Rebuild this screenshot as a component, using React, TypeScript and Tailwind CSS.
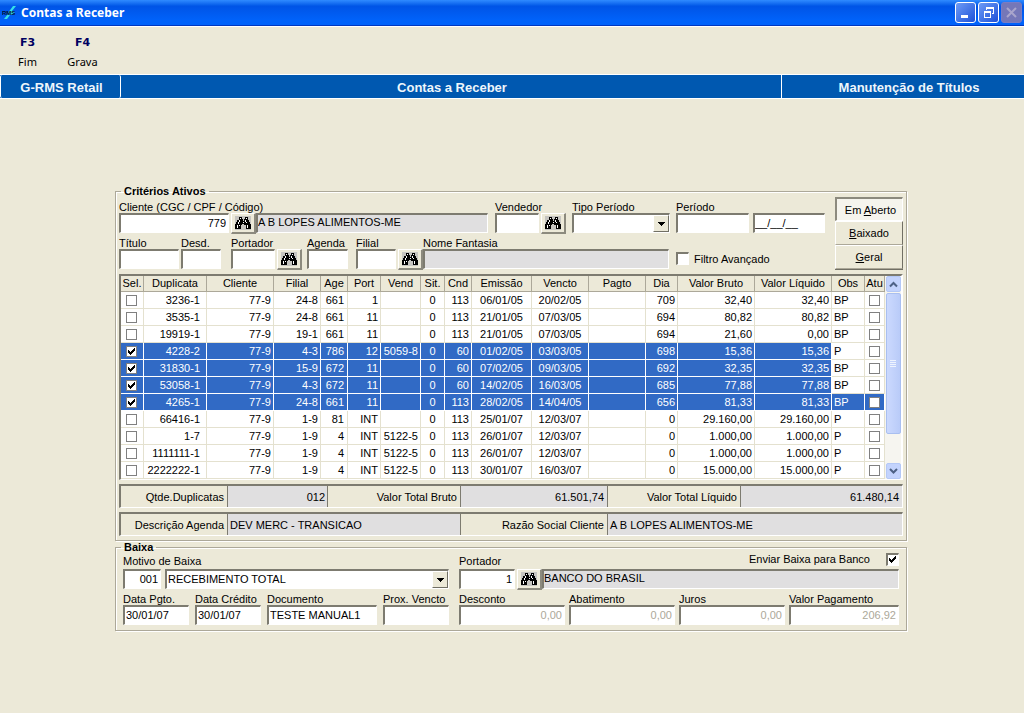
import { useState } from "react";
import type { ReactNode } from "react";
import clsx from "clsx";

const sunken =
  "border-t-2 border-l-2 border-r border-b border-t-[#7d7b70] border-l-[#7d7b70] border-r-white border-b-white";
const raised = "border border-t-white border-l-white border-r-[#716f64] border-b-[#716f64]";

type Row = {
  dup: string;
  cli: string;
  filial: string;
  age: string;
  port: string;
  vend: string;
  cnd: string;
  emissao: string;
  vencto: string;
  dia: string;
  bruto: string;
  liquido: string;
  obs: string;
};

const makeRow = (line: string): Row => {
  const [dup, filial, age, port, vend, cnd, emissao, vencto, dia, bruto, liquido, obs] = line.split("|");
  return { dup, cli: "77-9", filial, age, port, vend, cnd, emissao, vencto, dia, bruto, liquido, obs };
};

const ROWS: Row[] = [
  "3236-1|24-8|661|1||113|06/01/05|20/02/05|709|32,40|32,40|BP",
  "3535-1|24-8|661|11||113|21/01/05|07/03/05|694|80,82|80,82|BP",
  "19919-1|19-1|661|11||113|21/01/05|07/03/05|694|21,60|0,00|BP",
  "4228-2|4-3|786|12|5059-8|60|01/02/05|03/03/05|698|15,36|15,36|P",
  "31830-1|15-9|672|11||60|07/02/05|09/03/05|692|32,35|32,35|BP",
  "53058-1|4-3|672|11||60|14/02/05|16/03/05|685|77,88|77,88|BP",
  "4265-1|24-8|661|11||113|28/02/05|14/04/05|656|81,33|81,33|BP",
  "66416-1|1-9|81|INT||113|25/01/07|12/03/07|0|29.160,00|29.160,00|P",
  "1-7|1-9|4|INT|5122-5|113|26/01/07|12/03/07|0|1.000,00|1.000,00|P",
  "1111111-1|1-9|4|INT|5122-5|113|26/01/07|12/03/07|0|1.000,00|1.000,00|P",
  "2222222-1|1-9|4|INT|5122-5|113|30/01/07|16/03/07|0|15.000,00|15.000,00|P",
].map(makeRow);

const COLUMNS = [
  { title: "Sel.", width: "w-[23px]" },
  { title: "Duplicata", width: "w-[63px]" },
  { title: "Cliente", width: "w-[67px]" },
  { title: "Filial", width: "w-[47px]" },
  { title: "Age", width: "w-[27px]" },
  { title: "Port", width: "w-[33px]" },
  { title: "Vend", width: "w-[40px]" },
  { title: "Sit.", width: "w-[24px]" },
  { title: "Cnd", width: "w-[27px]" },
  { title: "Emissão", width: "w-[60px]" },
  { title: "Vencto", width: "w-[57px]" },
  { title: "Pagto", width: "w-[57px]" },
  { title: "Dia", width: "w-[32px]" },
  { title: "Valor Bruto", width: "w-[77px]" },
  { title: "Valor Líquido", width: "w-[77px]" },
  { title: "Obs", width: "w-[33px]" },
  { title: "Atu", width: "w-[20px]" },
];

function Binoculars() {
  return (
    <svg width="16" height="14" viewBox="0 0 16 14" shapeRendering="crispEdges" aria-hidden="true">
      <path fill="#c6c5c1" d="M0 0h16v14H0z" />
      <path
        fill="#000"
        d="M4 1h3v2h1v2h1V3h1V1h3v3h1v2h1v2h1v5h-5V9H9V8H7v1H6v4H0V8h1V6h1V4h2z"
      />
      <path fill="#fff" d="M5 2h1v1H5zM11 2h1v1h-1zM4 4h1v2H4zM10 4h1v2h-1zM3 6h1v2H3zM2 9h1v3H2zM4 9h1v1H4zM12 9h1v3h-1zM11 6h1v1h-1zM8 6h1v1H8z" />
    </svg>
  );
}

function LookupButton({ label }: { label: string }) {
  return (
    <button
      type="button"
      aria-label={label}
      className="ml-0.5 flex h-[21px] w-[25px] shrink-0 items-center justify-center border border-t-white border-r-2 border-r-[#8c8a7e] border-b-2 border-b-[#8c8a7e] border-l-white bg-[#ece9d8]"
    >
      <Binoculars />
    </button>
  );
}

function Field({
  id,
  label,
  value = "",
  className,
  inputClass,
  gap,
  disabled,
  children,
}: {
  id: string;
  label: string;
  value?: string;
  className?: string;
  inputClass?: string;
  gap?: boolean;
  disabled?: boolean;
  children?: ReactNode;
}) {
  return (
    <div className={className}>
      <label htmlFor={id} className={clsx("block h-[11px] leading-[11px] whitespace-nowrap", gap && "mb-0.5")}>
        {label}
      </label>
      <div className="flex h-5">
        <input
          id={id}
          defaultValue={value}
          disabled={disabled}
          className={clsx(sunken, "h-5 min-w-0 bg-white pr-0.5 pb-0.5 pl-px disabled:text-[#aca899]", inputClass ?? "w-full")}
        />
        {children}
      </div>
    </div>
  );
}

function Combo({ id, options }: { id: string; options: string[] }) {
  return (
    <div className="relative h-5 flex-1">
      <select id={id} className={clsx(sunken, "h-5 w-full appearance-none bg-white pl-px")}>
        {options.map(o => (
          <option key={o}>{o}</option>
        ))}
      </select>
      <span
        className={clsx(raised, "pointer-events-none absolute top-0.5 right-px flex h-[17px] w-4 items-center justify-center bg-[#ece9d8]")}
      >
        <svg width="7" height="4" viewBox="0 0 7 4" shapeRendering="crispEdges">
          <path d="M0 0h7v1H6v1H5v1H4v1H3V3H2V2H1V1H0z" />
        </svg>
      </span>
    </div>
  );
}

function Check({
  id,
  label,
  checked,
  onChange,
  grid,
}: {
  id?: string;
  label?: string;
  checked?: boolean;
  onChange?: () => void;
  grid?: boolean;
}) {
  return (
    <span className="relative block shrink-0">
      <input
        id={id}
        type="checkbox"
        aria-label={label}
        {...(onChange ? { checked: !!checked, onChange } : { defaultChecked: checked })}
        className={clsx("peer block appearance-none bg-white", grid ? "size-[11px] border border-[#808080]" : clsx(sunken, "size-[13px]"))}
      />
      <svg
        width="7"
        height="7"
        viewBox="0 0 7 7"
        shapeRendering="crispEdges"
        className={clsx("pointer-events-none absolute hidden peer-checked:block", grid ? "top-0.5 left-0.5" : "top-[3px] left-[3px]")}
      >
        <path d="M0 2h1v1h1v1h1V3h1V2h1V1h1V0h1v3H6v1H5v1H4v1H3v1H2V6H1V5H0z" />
      </svg>
    </span>
  );
}

function TitleBar() {
  const frame = "flex size-[21px] items-center justify-center rounded-[3px] border";
  return (
    <header className="flex h-[26px] items-center bg-linear-to-b from-[#2f8bff] from-0% via-[#0054e6] via-25% to-[#0062fa] to-80% pr-0.5 pl-0.5 border-b border-[#0038c0]">
      <svg width="17" height="16" viewBox="0 0 17 16" aria-hidden="true">
        <path d="M2 14l4-5 2 1-3 4zM6 8l5-7 3 0-4 5 3 1-4 3z" fill="#35e0e8" />
        <text x="0" y="10" fontSize="6" fontWeight="bold" fontFamily="Liberation Sans, sans-serif" fill="#001030">
          RMS
        </text>
      </svg>
      <h1 className="ml-0.5 flex-1 pt-px font-['Noto_Sans',sans-serif] text-[12px] leading-4 font-bold text-white">
        Contas a Receber
      </h1>
      <div className="flex gap-0.5">
        <button type="button" aria-label="Minimizar" className={clsx(frame, "border-white bg-linear-to-br from-[#6f9bf5] to-[#1e4fd8]")}>
          <svg width="13" height="13" viewBox="0 0 13 13">
            <path d="M2 9h7v3H2z" fill="#fff" />
          </svg>
        </button>
        <button type="button" aria-label="Restaurar" className={clsx(frame, "border-white bg-linear-to-br from-[#6f9bf5] to-[#1e4fd8]")}>
          <svg width="13" height="13" viewBox="0 0 13 13" fill="#fff" shapeRendering="crispEdges">
            <path d="M4 1h8v7h-2V7h1V3H5v1H4zM2 5h7v7H2zm1 2v4h5V7z" fillRule="evenodd" />
          </svg>
        </button>
        <button type="button" aria-label="Fechar" disabled className={clsx(frame, "border-[#7a7cc4] bg-[#7577b8]")}>
          <svg width="13" height="13" viewBox="0 0 13 13">
            <path d="M2 2l9 9M11 2l-9 9" stroke="#a9a5cc" strokeWidth="2" />
          </svg>
        </button>
      </div>
    </header>
  );
}

function ScrollArrow({ down }: { down?: boolean }) {
  return (
    <button
      type="button"
      aria-label={down ? "Rolar para baixo" : "Rolar para cima"}
      className="flex h-4 w-[15px] shrink-0 items-center justify-center rounded-[2px] border border-[#b4c8f6] bg-[#c3d3fd]"
    >
      <svg width="9" height="7" viewBox="0 0 9 7" fill="none" stroke="#4d6185" strokeWidth="2">
        <path d={down ? "M1 1l3.500 3.500L8 1" : "M1 5.500L4.500 2 8 5.500"} />
      </svg>
    </button>
  );
}

function TitlesGrid() {
  const [selected, setSelected] = useState<number[]>([3, 4, 5, 6]);
  const current = 6;

  const toggle = (i: number) =>
    setSelected(s => (s.includes(i) ? s.filter(n => n !== i) : [...s, i]));

  return (
    <div className="mt-1 flex border-2 border-b border-t-[#7d7b70] border-l-[#7d7b70] border-r-white border-b-white bg-white">
      <table className="min-w-0 flex-1 table-fixed border-separate border-spacing-0">
        <thead>
          <tr>
            {COLUMNS.map(c => (
              <th
                key={c.title}
                className={clsx(c.width, "h-4 overflow-hidden border-r border-b border-[#aca899] bg-[#ece9d8] p-0 text-center leading-[15px] font-normal whitespace-nowrap")}
              >
                {c.title}
              </th>
            ))}
          </tr>
        </thead>
        <tbody>
          {ROWS.map((r, i) => {
            const on = selected.includes(i);
            const base = "h-[17px] border-r border-b p-0 leading-4 whitespace-nowrap";
            const plain = "border-[#e4e1cf] bg-white";
            const cell = clsx(base, on ? "border-white bg-[#316ac5] text-white" : plain);
            const tail = clsx(base, i === current ? "border-white bg-[#316ac5] text-white" : plain);
            return (
              <tr key={r.dup}>
                <td className={cell}>
                  <div className="flex pl-[5px]">
                    <Check grid label={`Selecionar ${r.dup}`} checked={on} onChange={() => toggle(i)} />
                  </div>
                </td>
                <td className={clsx(cell, "text-right")}><span className="pr-1.5">{r.dup}</span></td>
                <td className={clsx(cell, "text-right")}><span className="pr-0.5">{r.cli}</span></td>
                <td className={clsx(cell, "text-right")}><span className="pr-0.5">{r.filial}</span></td>
                <td className={clsx(cell, "text-right")}><span className="pr-[3px]">{r.age}</span></td>
                <td className={clsx(cell, "text-right")}><span className="pr-0.5">{r.port}</span></td>
                <td className={clsx(cell, "text-right")}><span className="pr-0.5">{r.vend}</span></td>
                <td className={clsx(cell, "text-center")}>0</td>
                <td className={clsx(cell, "text-right")}><span className="pr-0.5">{r.cnd}</span></td>
                <td className={clsx(cell, "text-center")}>{r.emissao}</td>
                <td className={clsx(cell, "text-center")}>{r.vencto}</td>
                <td className={cell} />
                <td className={clsx(cell, "text-right")}><span className="pr-0.5">{r.dia}</span></td>
                <td className={clsx(cell, "text-right")}><span className="pr-0.5">{r.bruto}</span></td>
                <td className={clsx(cell, "text-right")}><span className="pr-0.5">{r.liquido}</span></td>
                <td className={tail}><span className="pl-0.5">{r.obs}</span></td>
                <td className={tail}>
                  <div className="flex justify-center">
                    <Check grid label={`Atualizar ${r.dup}`} />
                  </div>
                </td>
              </tr>
            );
          })}
        </tbody>
      </table>
      <div className="flex w-4 flex-col items-center bg-[#f6f5f0]">
        <ScrollArrow />
        <div className="mt-px flex h-[141px] w-[15px] flex-col items-center justify-center gap-px rounded-[2px] border border-[#a9bff0] bg-linear-to-r from-[#cbd9fe] to-[#b9cbf8]">
          {[0, 1, 2, 3].map(n => (
            <span key={n} className="h-px w-1.5 bg-[#eef4fe]" />
          ))}
        </div>
        <div className="flex-1" />
        <ScrollArrow down />
      </div>
    </div>
  );
}

function Caption({ className, children }: { className: string; children: ReactNode }) {
  return (
    <span className={clsx(className, "border-r border-[#7d7b70] pr-[3px] text-right whitespace-nowrap")}>{children}</span>
  );
}

function Output({ className, children }: { className: string; children: ReactNode }) {
  return <output className={clsx(className, "bg-[#e0dfe0] whitespace-nowrap")}>{children}</output>;
}

function Group({ title, children }: { title: string; children: ReactNode }) {
  return (
    <fieldset className="min-w-0 border border-[#aca899] px-[3px] shadow-[1px_1px_0_#fff,inset_1px_1px_0_#fff]">
      <legend className="ml-0.5 h-3 px-[3px] text-[11px] leading-3 font-bold whitespace-nowrap">{title}</legend>
      {children}
    </fieldset>
  );
}

function StatusTabs() {
  const [tab, setTab] = useState("Aberto");
  const item = (name: string, node: ReactNode) => (
    <button
      type="button"
      onClick={() => setTab(name)}
      className={clsx(
        "flex h-6 w-full items-center justify-center border",
        tab === name
          ? "border-t-2 border-l-2 border-t-[#8c8a7e] border-r-white border-b-white border-l-[#8c8a7e] bg-[#f5f4ed] pt-0.5 pl-0.5"
          : "border-t-white border-r-[#716f64] border-b-[#aca899] border-l-white bg-[#ece9d8]",
      )}
    >
      <span>{node}</span>
    </button>
  );
  return (
    <div className="w-[68px] shrink-0 border-b border-[#716f64]">
      {item("Aberto", <>Em <u>A</u>berto</>)}
      {item("Baixado", <><u>B</u>aixado</>)}
      {item("Geral", <><u>G</u>eral</>)}
    </div>
  );
}

function Criteria() {
  return (
    <Group title="Critérios Ativos">
      <div className="flex gap-2.5">
        <div className="min-w-0 flex-1 pt-[5px]">
          <div className="flex">
            <Field id="cliente" label="Cliente (CGC / CPF / Código)" value="779" className="min-w-0 flex-1" inputClass="w-[110px] shrink-0 text-right">
              <LookupButton label="Procurar cliente" />
              <input
                aria-label="Nome do cliente"
                readOnly
                defaultValue="A B LOPES ALIMENTOS-ME"
                className={clsx(sunken, "h-5 min-w-0 flex-1 bg-[#e0dfe0] pb-[3px]")}
              />
            </Field>
            <Field id="vendedor" label="Vendedor" className="ml-[7px]" inputClass="w-[44px]">
              <LookupButton label="Procurar vendedor" />
            </Field>
            <div className="ml-1.5 w-[98px]">
              <label htmlFor="tipo" className="block h-[11px] leading-[11px]">Tipo Período</label>
              <Combo id="tipo" options={[""]} />
            </div>
            <Field id="de" label="Período" className="ml-1.5 w-[149px]" inputClass="w-[73px]">
              <input aria-label="Período até" defaultValue="__/__/__" className={clsx(sunken, "ml-1 h-5 w-[72px] bg-white pb-0.5")} />
            </Field>
          </div>
          <div className="mt-[5px] flex">
            <Field id="titulo" label="Título" className="w-[60px]" />
            <Field id="desd" label="Desd." className="ml-0.5 w-[40px]" />
            <Field id="portador" label="Portador" className="ml-2.5" inputClass="w-[44px]">
              <LookupButton label="Procurar portador" />
            </Field>
            <Field id="agenda" label="Agenda" className="ml-[5px] w-[41px]" />
            <Field id="filial" label="Filial" className="ml-2" inputClass="w-[40px]">
              <LookupButton label="Procurar filial" />
            </Field>
            <div className="min-w-0 flex-1">
              <label htmlFor="fantasia" className="block h-[11px] leading-[11px]">Nome Fantasia</label>
              <input id="fantasia" readOnly className={clsx(sunken, "block h-5 w-full bg-[#e0dfe0]")} />
            </div>
            <div className="ml-[7px] flex w-[149px] items-end gap-[5px] pb-1">
              <Check id="filtro" />
              <label htmlFor="filtro" className="leading-3">Filtro Avançado</label>
            </div>
          </div>
        </div>
        <StatusTabs />
      </div>

      <TitlesGrid />

      <div className={clsx(sunken, "mt-1 flex h-6 leading-[22px]")}>
        <Caption className="w-[107px]">Qtde.Duplicatas</Caption>
        <Output className="w-[100px] border-r border-[#7d7b70] pr-0.5 text-right">012</Output>
        <Caption className="w-[133px]">Valor Total Bruto</Caption>
        <Output className="flex-1 border-r border-[#7d7b70] pr-[3px] text-right">61.501,74</Output>
        <Caption className="w-[133px]">Valor Total Líquido</Caption>
        <Output className="w-[161px] pr-[3px] text-right">61.480,14</Output>
      </div>
      <div className={clsx(sunken, "mt-1 mb-1 flex h-6 leading-[22px]")}>
        <Caption className="w-[107px]">Descrição Agenda</Caption>
        <Output className="w-[233px] border-r border-[#7d7b70] pl-0.5">DEV MERC - TRANSICAO</Output>
        <Caption className="w-[147px]">Razão Social Cliente</Caption>
        <Output className="flex-1 pl-0.5">A B LOPES ALIMENTOS-ME</Output>
      </div>
    </Group>
  );
}

function Payment() {
  return (
    <Group title="Baixa">
      <div className="flex gap-2.5 px-1 pt-[3px] pb-[5px]">
        <div className="w-[326px] shrink-0">
          <Field id="motivo" label="Motivo de Baixa" value="001" gap inputClass="w-[38px] text-right">
            <div className="ml-1 flex flex-1">
              <Combo id="motivo-desc" options={["RECEBIMENTO TOTAL"]} />
            </div>
          </Field>
          <div className="mt-[5px] flex gap-1.5">
            <Field id="pgto" label="Data Pgto." value="30/01/07" className="w-[66px]" />
            <Field id="credito" label="Data Crédito" value="30/01/07" className="w-[66px]" />
            <Field id="documento" label="Documento" value="TESTE MANUAL1" className="w-[110px]" />
            <Field id="prox" label="Prox. Vencto" className="w-[66px]" />
          </div>
        </div>
        <div className="min-w-0 flex-1">
          <div className="flex h-[13px] items-end justify-between">
            <label htmlFor="portador-baixa" className="h-[13px] leading-[11px]">Portador</label>
            <div className="flex h-4 items-start gap-4">
              <label htmlFor="enviar" className="leading-3">Enviar Baixa para Banco</label>
              <Check id="enviar" checked />
            </div>
          </div>
          <div className="flex h-5">
            <input id="portador-baixa" defaultValue="1" className={clsx(sunken, "h-5 w-[56px] bg-white px-0.5 pb-0.5 text-right")} />
            <LookupButton label="Procurar portador da baixa" />
            <input
              aria-label="Nome do portador"
              readOnly
              defaultValue="BANCO DO BRASIL"
              className={clsx(sunken, "h-5 min-w-0 flex-1 bg-[#e0dfe0] pb-[3px]")}
            />
          </div>
          <div className="mt-[5px] flex gap-1">
            <Field id="desconto" label="Desconto" value="0,00" disabled className="w-[106px]" inputClass="w-full text-right" />
            <Field id="abatimento" label="Abatimento" value="0,00" disabled className="w-[106px]" inputClass="w-full text-right" />
            <Field id="juros" label="Juros" value="0,00" disabled className="w-[106px]" inputClass="w-full text-right" />
            <Field id="valor" label="Valor Pagamento" value="206,92" disabled className="flex-1" inputClass="w-full text-right" />
          </div>
        </div>
      </div>
    </Group>
  );
}

export default function App() {
  const cell = "flex items-center justify-center pt-0.5";
  return (
    <div className="min-h-screen bg-[#ece9d8] font-['Liberation_Sans',Arial,sans-serif] text-[11px] text-black">
      <TitleBar />
      <nav className="flex h-12 border-t border-white font-['Noto_Sans',sans-serif] text-[11px]">
        {[["F3", "Fim"], ["F4", "Grava"]].map(([key, name]) => (
          <button key={key} type="button" className="flex w-[55px] flex-col items-center gap-[5px] pt-[9px] leading-[14px]">
            <b className="font-['DejaVu_Sans',sans-serif] text-[#000060]">{key}</b>
            <span>{name}</span>
          </button>
        ))}
      </nav>
      <div className="flex h-[25px] border-y border-white bg-[#0058b0] text-[13px] font-bold text-[#eef6fb]">
        <div className={clsx(cell, "w-[121px] rounded-[2px] border-x border-white pl-0.5")}>G-RMS Retail</div>
        <div className={clsx(cell, "flex-1 pl-0.5")}>Contas a Receber</div>
        <div className={clsx(cell, "w-[243px] border-l border-white pl-3")}>Manutenção de Títulos</div>
      </div>
      <main className="pt-[86px] pr-[117px] pl-[115px]">
        <Criteria />
        <Payment />
      </main>
    </div>
  );
}
